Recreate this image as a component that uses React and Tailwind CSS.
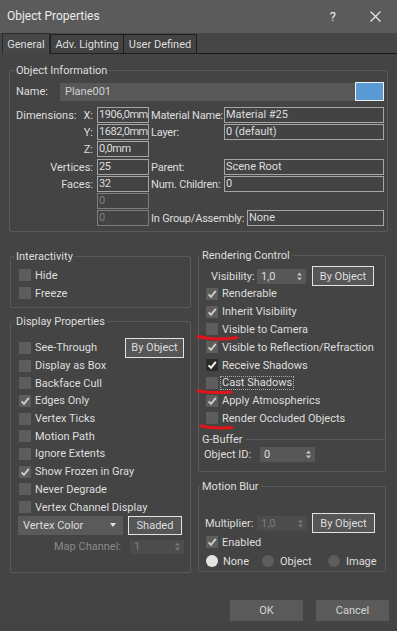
import React from 'react';

function Check({ on, dark }) {
  return (
    <span className={`flex h-[12px] w-[12px] shrink-0 items-center justify-center ${dark ? 'bg-[#2b2b2b]' : 'bg-[#5d5d5d]'}`}>
      {on && (
        <svg width="10" height="10" viewBox="0 0 10 10">
          <path d="M1.6 5.3 L4 7.9 L8.8 1.9" fill="none" stroke={dark ? '#ffffff' : '#cdcdcd'} strokeWidth="1.9" />
        </svg>
      )}
    </span>
  );
}

function CheckRow({ label, on, dark, focus, className = '' }) {
  return (
    <div className={`flex items-center whitespace-nowrap ${className}`}>
      <Check on={on} dark={dark} />
      {focus ? (
        <span className="ml-[2px] border border-dotted border-[#a8a8a8] px-[1px] leading-[12px]">{label}</span>
      ) : (
        <span className="ml-[4px]">{label}</span>
      )}
    </div>
  );
}

function Arrows({ dim }) {
  return (
    <svg width="5" height="9" viewBox="0 0 5 9">
      <path d="M0 3.5 L2.5 0.5 L5 3.5 Z M0 5.5 L2.5 8.5 L5 5.5 Z" fill={dim ? '#7a7a7a' : '#c4c4c4'} />
    </svg>
  );
}

function Spinner({ value, disabled, className = '' }) {
  return (
    <div className={`flex items-center justify-between pl-[4px] pr-[4px] ${disabled ? 'bg-[#4c4c4c] text-[#7c7c7c]' : 'bg-[#575757]'} ${className}`}>
      <span>{value}</span>
      <Arrows dim={disabled} />
    </div>
  );
}

function Btn({ children, className = '' }) {
  return (
    <div className={`flex items-center justify-center border border-[#e2e2e2] bg-[#565656] ${className}`}>
      {children}
    </div>
  );
}

function Field({ children, dim, className = '' }) {
  return (
    <div className={`h-[16px] shrink-0 overflow-hidden whitespace-nowrap border bg-[#434343] pl-[1px] leading-[14px] ${dim ? 'border-[#7e7e7e] text-[#7e7e7e]' : 'border-[#a5a5a5]'} ${className}`}>
      {children}
    </div>
  );
}

function Group({ title, className = '', children }) {
  return (
    <fieldset className={`rounded-[2px] border border-[#5a5a5a] ${className}`}>
      <legend className="px-[2px] leading-[13px]">{title}</legend>
      {children}
    </fieldset>
  );
}

function InfoRow({ left, axis, value, dim, rlabel, rvalue, wide, className = '' }) {
  return (
    <div className={`flex h-[16px] items-center whitespace-nowrap ${className}`}>
      <div className="ml-[2px] flex w-[77px] shrink-0 justify-between">
        <span>{left}</span>
        <span className="text-right">{axis}</span>
      </div>
      <Field dim={dim} className="ml-[4px] w-[52px] tracking-[-0.45px]">{value}</Field>
      {rlabel && (
        <>
          <div className={`ml-[2px] shrink-0 tracking-[-0.2px] ${wide ? 'w-[96px]' : 'w-[73px]'}`}>{rlabel}</div>
          <Field className={wide ? 'w-[137px]' : 'w-[160px]'}>{rvalue}</Field>
        </>
      )}
    </div>
  );
}

export default function App() {
  const leftRows = [
    ['Display as Box', false],
    ['Backface Cull', false],
    ['Edges Only', true],
    ['Vertex Ticks', false],
    ['Motion Path', false],
    ['Ignore Extents', false],
    ['Show Frozen in Gray', true],
    ['Never Degrade', false],
    ['Vertex Channel Display', false],
  ];

  return (
    <div className="relative h-[631px] w-[397px] overflow-hidden bg-[#444444] font-['Roboto',sans-serif] text-[11px] leading-[13px] text-[#dedede]">
      {/* title bar */}
      <div className="flex h-[33px] items-center bg-[#5b5b5b] pl-[7px] text-[12px] text-[#ececec]">
        <span>Object Properties</span>
        <span className="ml-auto mr-[34px] text-[13px]">?</span>
        <svg className="mr-[16px]" width="11" height="11" viewBox="0 0 11 11">
          <path d="M0.5 0.5 L10.5 10.5 M10.5 0.5 L0.5 10.5" stroke="#e8e8e8" strokeWidth="1.2" />
        </svg>
      </div>

      {/* tabs */}
      <div className="flex h-[21px] items-end bg-[#464646] pl-[2px]">
        <div className="flex h-[21px] w-[48px] items-center justify-center border-x border-t border-[#2a2a2a] bg-[#474747]">General</div>
        <div className="flex h-[20px] w-[74px] items-center justify-center border-x border-t border-b border-[#1f1f1f] bg-[#424242]">Adv. Lighting</div>
        <div className="flex h-[20px] w-[73px] items-center justify-center border-r border-t border-b border-[#1f1f1f] bg-[#424242]">User Defined</div>
        <div className="h-[1px] flex-1 bg-[#1a1a1a]" />
      </div>

      {/* object information */}
      <Group title="Object Information" className="ml-[9px] mt-[10px] w-[379px] pb-[5px] pl-[4px]">
        <div className="mt-[5px] flex h-[19px] items-center">
          <span className="ml-[2px] w-[44px]">Name:</span>
          <div className="flex h-[18px] w-[295px] items-center bg-[#585858] pl-[5px] text-[#d0d0d0]">Plane001</div>
          <div className="h-[19px] w-[29px] border border-[#f0f0f0] bg-[#5b9bd5]" />
        </div>
        <div className="mt-[6px] flex flex-col gap-[1px]">
          <InfoRow left="Dimensions:" axis="X:" value="1906,0mm" rlabel="Material Name:" rvalue="Material #25" />
          <InfoRow axis="Y:" value="1682,0mm" rlabel="Layer:" rvalue="0 (default)" />
          <InfoRow axis="Z:" value="0,0mm" />
          <InfoRow axis="Vertices:" value="25" rlabel="Parent:" rvalue="Scene Root" className="mt-[1px]" />
          <InfoRow axis="Faces:" value="32" rlabel="Num. Children:" rvalue="0" />
          <InfoRow value="0" dim />
          <InfoRow value="0" dim rlabel="In Group/Assembly:" rvalue="None" wide />
        </div>
      </Group>

      {/* lower columns */}
      <div className="mt-[17px] flex items-start gap-[7px] pl-[10px]">
        <div className="flex w-[181px] flex-col">
          <Group title="Interactivity" className="mt-[1px] pb-[5px] pl-[3px]">
            <div className="mt-[3px] flex flex-col pl-[5px]">
              <CheckRow label="Hide" className="h-[18px]" />
              <CheckRow label="Freeze" className="h-[18px]" />
            </div>
          </Group>

          <Group title="Display Properties" className="mt-[7px] pb-[18px] pl-[3px]">
            <div className="mt-[11px] flex flex-col pl-[5px]">
              <div className="flex h-[17.7px] items-center">
                <CheckRow label="See-Through" />
                <Btn className="ml-auto mr-[6px] h-[20px] w-[59px] shrink-0">By Object</Btn>
              </div>
              {leftRows.map(([label, on]) => (
                <CheckRow key={label} label={label} on={on} className="h-[17.7px]" />
              ))}
            </div>
            <div className="flex h-[19px] items-center">
              <div className="ml-[4px] flex h-[19px] w-[105px] items-center justify-between bg-[#5a5a5a] pl-[5px] pr-[7px]">
                <span>Vertex Color</span>
                <svg width="6" height="4" viewBox="0 0 6 4">
                  <path d="M0 0 L6 0 L3 4 Z" fill="#e0e0e0" />
                </svg>
              </div>
              <Btn className="ml-[5px] h-[19px] w-[54px]">Shaded</Btn>
            </div>
            <div className="mt-[5px] flex h-[14px] items-center">
              <span className="w-[116px] pr-[9px] text-right text-[#8a8a8a]">Map Channel:</span>
              <Spinner value="1" disabled className="h-[14px] w-[54px]" />
            </div>
          </Group>
        </div>

        <div className="flex w-[188px] flex-col">
          <Group title="Rendering Control" className="pb-[9px] pl-[1px]">
            <div className="mt-[5px] flex h-[18px] items-center pl-[11px]">
              <span className="w-[46px]">Visibility:</span>
              <Spinner value="1,0" className="h-[15px] w-[49px]" />
              <Btn className="ml-[6px] h-[20px] w-[62px]">By Object</Btn>
            </div>
            <div className="flex flex-col pl-[6px]">
              <CheckRow label="Renderable" on className="h-[17.8px]" />
              <CheckRow label="Inherit Visibility" on className="h-[17.8px]" />
              <CheckRow label="Visible to Camera" className="h-[17.8px]" />
              <CheckRow label="Visible to Reflection/Refraction" on className="h-[17.8px]" />
              <CheckRow label="Receive Shadows" on dark className="h-[17.8px]" />
              <CheckRow label="Cast Shadows" focus className="h-[17.8px]" />
              <CheckRow label="Apply Atmospherics" on className="h-[17.8px]" />
              <CheckRow label="Render Occluded Objects" className="h-[17.8px]" />
            </div>
            <div className="mt-[6px] flex h-[13px] items-center pl-[2px]">
              <span>G-Buffer</span>
              <div className="ml-[3px] h-[1px] flex-1 bg-[#5a5a5a]" />
            </div>
            <div className="flex h-[16px] items-center pl-[4px]">
              <span className="w-[56px]">Object ID:</span>
              <Spinner value="0" className="h-[15px] w-[55px]" />
            </div>
          </Group>

          <Group title="Motion Blur" className="mt-[8px] pb-[1px] pl-[1px]">
            <div className="mt-[20px] flex h-[20px] items-center pl-[5px]">
              <span className="w-[52px]">Multiplier:</span>
              <Spinner value="1,0" disabled className="h-[15px] w-[50px]" />
              <Btn className="ml-[5px] h-[20px] w-[63px]">By Object</Btn>
            </div>
            <CheckRow label="Enabled" on className="h-[18px] pl-[6px]" />
            <div className="mt-[1px] flex h-[18px] items-center pl-[6px]">
              <div className="flex w-[56px] items-center">
                <span className="h-[12px] w-[12px] rounded-full bg-[#e4e4e4]" />
                <span className="ml-[5px]">None</span>
              </div>
              <div className="flex w-[66px] items-center">
                <span className="h-[12px] w-[12px] rounded-full bg-[#5d5d5d]" />
                <span className="ml-[6px]">Object</span>
              </div>
              <div className="flex items-center">
                <span className="h-[12px] w-[12px] rounded-full bg-[#5d5d5d]" />
                <span className="ml-[6px]">Image</span>
              </div>
            </div>
          </Group>
        </div>
      </div>

      {/* dialog buttons */}
      <div className="mt-[27px] flex justify-end gap-[13px] pr-[8px]">
        <div className="flex h-[21px] w-[73px] items-center justify-center bg-[#5a5a5a] text-[#d4d4d4]">OK</div>
        <div className="flex h-[21px] w-[73px] items-center justify-center bg-[#5a5a5a] text-[#d4d4d4]">Cancel</div>
      </div>

      {/* red annotation marks */}
      <svg className="pointer-events-none absolute left-0 top-0" width="397" height="631">
        <path d="M198 336.5 Q214 341 237 337.5" fill="none" stroke="#e0141b" strokeWidth="3" strokeLinecap="round" />
        <path d="M198 391 Q213 393.5 231 392" fill="none" stroke="#e0141b" strokeWidth="3" strokeLinecap="round" />
        <path d="M201 426 Q214 429 232 427.5" fill="none" stroke="#e0141b" strokeWidth="3" strokeLinecap="round" />
      </svg>
    </div>
  );
}
